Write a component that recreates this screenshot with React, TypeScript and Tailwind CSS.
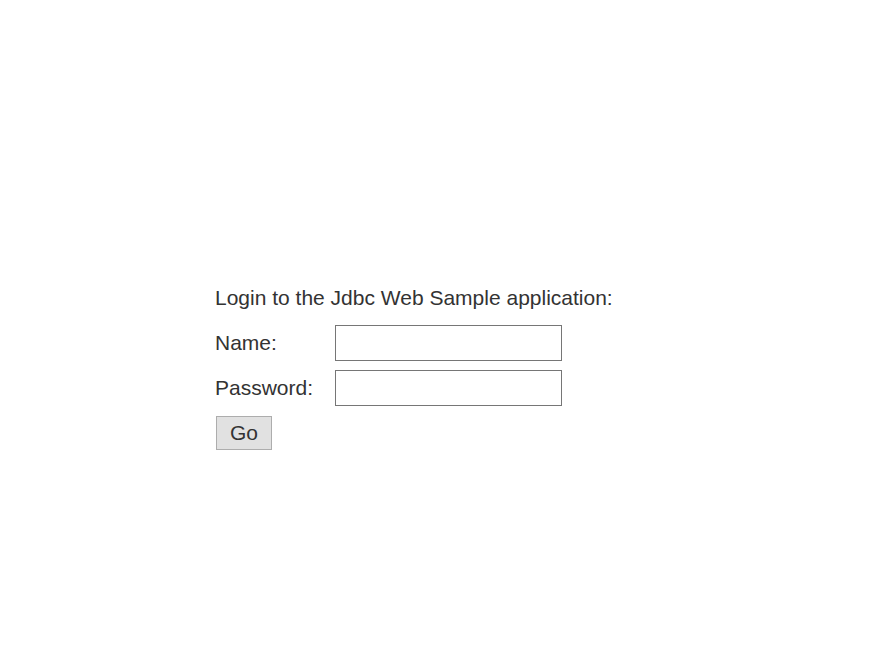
export default function App() {
  return (
    <div className="w-[895px] h-[661px] bg-white text-[#333333] text-[21px]" style={{ fontFamily: '"Liberation Sans", Arial, sans-serif' }}>
      <div className="pt-[286px] pl-[215px] flex flex-col">
        <div className="h-[24px] leading-[24px]">Login to the Jdbc Web Sample application:</div>
        <div className="mt-[15px] flex items-center h-[36px]">
          <div className="w-[120px] leading-[24px]">Name:</div>
          <input className="w-[227px] h-[36px] border border-[#767676] bg-white outline-none px-1" />
        </div>
        <div className="mt-[9px] flex items-center h-[36px]">
          <div className="w-[120px] leading-[24px]">Password:</div>
          <input type="password" className="w-[227px] h-[36px] border border-[#767676] bg-white outline-none px-1" />
        </div>
        <div className="mt-[10px] ml-[1px]">
          <button className="w-[56px] h-[34px] border border-[#adadad] bg-[#e1e1e1] text-[#333333] text-[21px] leading-[24px]">Go</button>
        </div>
      </div>
    </div>
  );
}
